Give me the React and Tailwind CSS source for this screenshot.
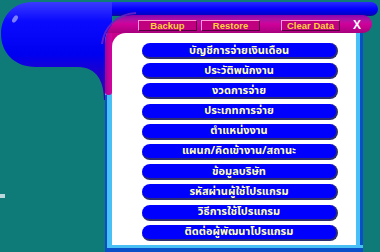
import React from "react";

const items = [
  "บัญชีการจ่ายเงินเดือน",
  "ประวัติพนักงาน",
  "งวดการจ่าย",
  "ประเภทการจ่าย",
  "ตำแหน่งงาน",
  "แผนก/คิดเข้างาน/สถานะ",
  "ข้อมูลบริษัท",
  "รหัสผ่านผู้ใช้โปรแกรม",
  "วิธีการใช้โปรแกรม",
  "ติดต่อผู้พัฒนาโปรแกรม",
];

function Decoration() {
  return (
    <svg className="absolute left-0 top-0" width="380" height="110" viewBox="0 0 380 110">
      <defs>
        <linearGradient id="blob" gradientUnits="userSpaceOnUse" x1="0" y1="2" x2="0" y2="98">
          <stop offset="0" stopColor="#3a3aff" />
          <stop offset="0.2" stopColor="#0a0aff" />
          <stop offset="0.55" stopColor="#0000f0" />
          <stop offset="0.72" stopColor="#1a00d0" />
          <stop offset="1" stopColor="#3a00a8" />
        </linearGradient>
        <linearGradient id="bar" gradientUnits="userSpaceOnUse" x1="0" y1="2" x2="0" y2="16">
          <stop offset="0" stopColor="#2a2aff" />
          <stop offset="0.5" stopColor="#0000ff" />
          <stop offset="0.85" stopColor="#0000d0" />
          <stop offset="1" stopColor="#10108a" />
        </linearGradient>
      </defs>
      <path d="M 100 2 H 371 A 7 7 0 0 1 371 16 H 100 Z" fill="url(#bar)" />
      <path
        d="M 32 2 H 112 V 100 H 104 C 104 82 97 67 78 67 H 36 C 14 67 1 52 1 34 C 1 16 14 2 32 2 Z"
        fill="url(#blob)"
      />
      <ellipse cx="15" cy="19" rx="2.2" ry="4" transform="rotate(35 15 19)" fill="#9a9aff" opacity="0.8" />
      <path d="M 102 44 C 104 28 116 14 136 13" stroke="#6a20c8" strokeWidth="2" fill="none" opacity="0.9" />
    </svg>
  );
}

function TitleButton({ children }) {
  return (
    <div className="w-[59px] h-[11px] flex items-center justify-center bg-[#c0007e] border border-t-[#ff9ad8] border-l-[#ff9ad8] border-b-[#50003a] border-r-[#50003a] text-[9.5px] leading-none font-bold text-[#ffd23a] font-['Liberation_Sans',Arial,sans-serif]">
      {children}
    </div>
  );
}

export default function App() {
  return (
    <div className="relative w-[380px] h-[252px] overflow-hidden bg-[#0f7b79]">
      <Decoration />
      <div className="absolute left-0 top-[194px] w-[5px] h-[4px] bg-[#bcd6dc]" />
      <div className="relative ml-[105px] pt-[15px] w-[267px] h-[252px]">
        <div className="w-[267px] h-[237px] flex flex-col rounded-tl-[28px] overflow-hidden">
          <div className="h-[18px] flex items-start pt-[5px] pl-[33px] rounded-r-[9px] bg-gradient-to-b from-[#8a00b0] via-[#d0009a] to-[#a8007e]">
            <TitleButton>Backup</TitleButton>
            <div className="w-[4px]" />
            <TitleButton>Restore</TitleButton>
            <div className="w-[21px]" />
            <TitleButton>Clear Data</TitleButton>
            <div className="ml-[13px] -mt-[1px] text-[12px] leading-none font-bold text-white font-['Liberation_Sans',Arial,sans-serif]">
              X
            </div>
          </div>
          <div className="flex-1 w-[258px] flex flex-col">
            <div className="flex-1 flex">
              <div className="w-[7px] flex flex-col bg-[#48bff5]">
                <div className="h-[62px] bg-gradient-to-r from-[#a0009a] to-[#d6009a] rounded-b-[3px]" />
                <div className="flex-1 border-l-2 border-[#0a4fc8]" />
              </div>
              <div className="flex-1 bg-[#c8008c]">
                <div className="h-full bg-white rounded-tl-[14px] pl-[30px] pt-[10px] flex flex-col gap-[4.2px]">
                  {items.map((t) => (
                    <div
                      key={t}
                      className="w-[196px] h-[16px] shrink-0 rounded-full bg-[#0000ff] border-r-2 border-b-2 border-[#2c2c72] flex items-center justify-center text-[11px] leading-none font-bold text-[#ffffb8] font-['Tahoma','Noto_Sans_Thai','Noto_Sans',sans-serif]"
                    >
                      {t}
                    </div>
                  ))}
                </div>
              </div>
              <div className="w-[7px] bg-[#48bff5] border-r-[3px] border-[#0a4fc8]" />
            </div>
            <div className="h-[7px] bg-[#48bff5] border-b-4 border-l-2 border-[#0a4fc8]" />
          </div>
        </div>
      </div>
    </div>
  );
}
